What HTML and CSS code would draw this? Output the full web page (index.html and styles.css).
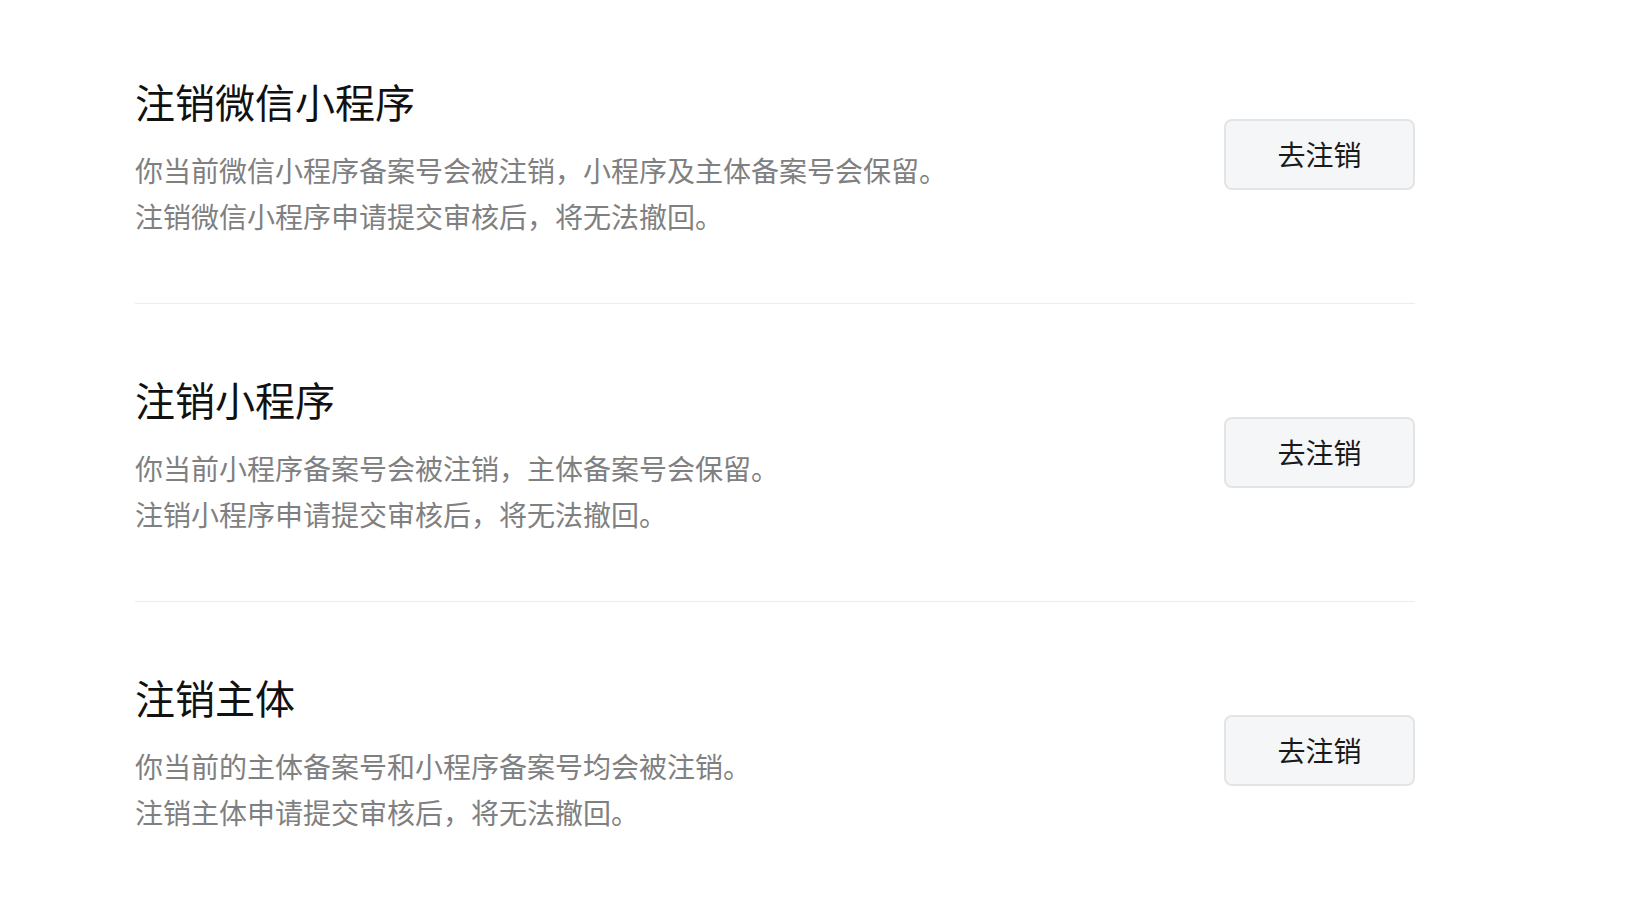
FILE: index.html
```html
<!DOCTYPE html>
<html lang="zh-CN">
<head>
<meta charset="utf-8">
<title>注销</title>
<link rel="stylesheet" href="styles.css">
</head>
<body>
<div class="page">
  <div class="item">
    <div class="info">
      <div class="title">注销微信小程序</div>
      <div class="desc">你当前微信小程序备案号会被注销，小程序及主体备案号会保留。<br>注销微信小程序申请提交审核后，将无法撤回。</div>
    </div>
    <button class="btn">去注销</button>
  </div>
  <div class="item">
    <div class="info">
      <div class="title">注销小程序</div>
      <div class="desc">你当前小程序备案号会被注销，主体备案号会保留。<br>注销小程序申请提交审核后，将无法撤回。</div>
    </div>
    <button class="btn">去注销</button>
  </div>
  <div class="item last">
    <div class="info">
      <div class="title">注销主体</div>
      <div class="desc">你当前的主体备案号和小程序备案号均会被注销。<br>注销主体申请提交审核后，将无法撤回。</div>
    </div>
    <button class="btn">去注销</button>
  </div>
</div>
</body>
</html>
```
FILE: styles.css
```css
html, body {
  margin: 0;
  padding: 0;
  background: #ffffff;
}
body {
  font-family: "Noto Sans CJK SC", "Noto Sans", sans-serif;
}
.page {
  width: 1280px;
  margin-left: 135px;
  padding-top: 6px;
}
.item {
  display: flex;
  align-items: center;
  justify-content: space-between;
  padding: 67px 0 64px;
  border-bottom: 1px solid #ececec;
}
.item.last {
  border-bottom: none;
}
.info {
  display: flex;
  flex-direction: column;
  gap: 18px;
}
.title {
  font-size: 40px;
  line-height: 56px;
  color: #111111;
}
.desc {
  font-size: 28px;
  line-height: 46px;
  color: #808080;
}
.btn {
  width: 191px;
  height: 71px;
  box-sizing: border-box;
  border: 2px solid #e3e4e6;
  border-radius: 8px;
  background: #f5f6f8;
  font-family: "Noto Sans CJK SC", "Noto Sans", sans-serif;
  font-size: 28px;
  color: #1a1a1a;
  padding: 0;
  margin-top: -4px;
}
```
